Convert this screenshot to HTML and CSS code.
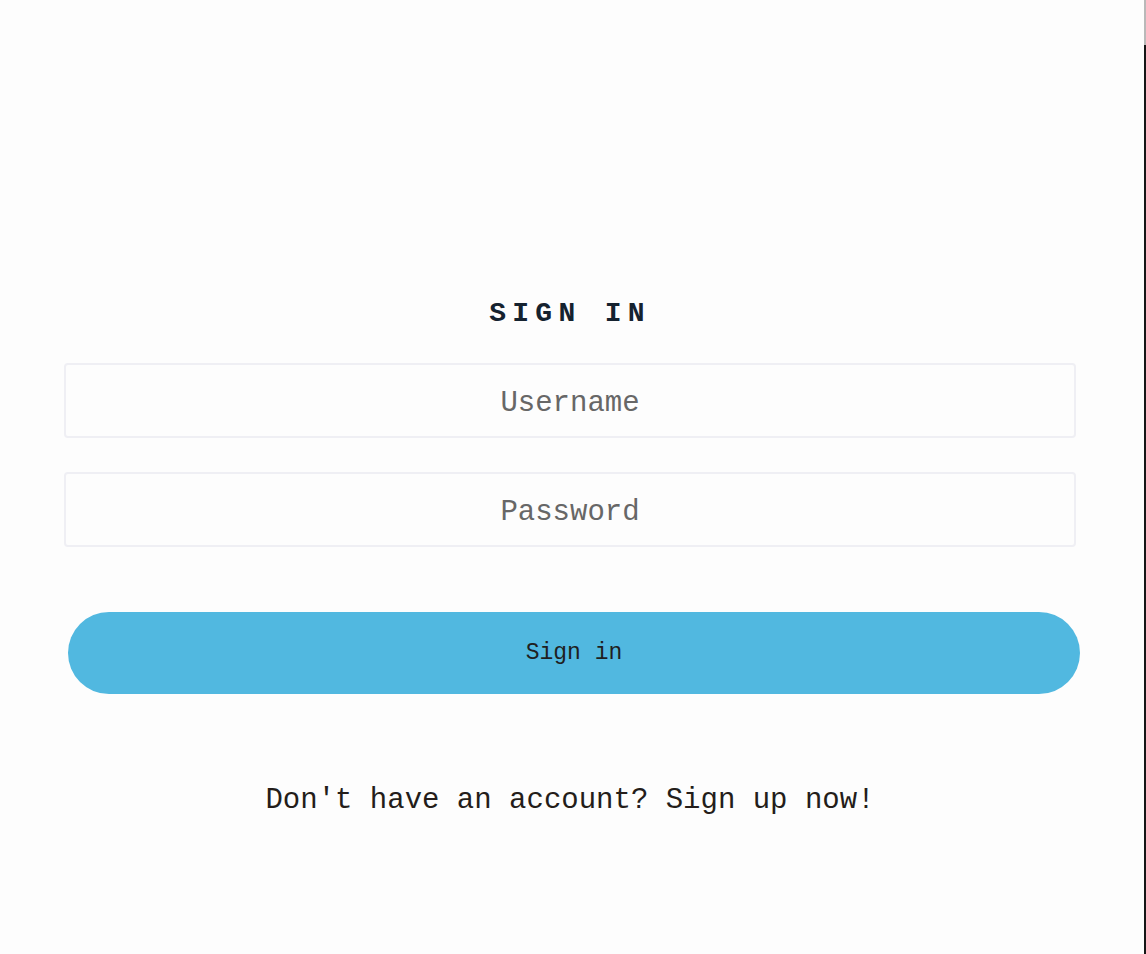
FILE: index.html
```html
<!DOCTYPE html>
<html lang="en">
<head>
<meta charset="utf-8">
<title>Sign in</title>
<link rel="stylesheet" href="styles.css">
</head>
<body>
<div class="main">
  <form class="form">
    <h1 class="heading">SIGN IN</h1>
    <input class="field" type="text" placeholder="Username">
    <input class="field" type="password" placeholder="Password">
    <button class="btn" type="button">Sign in</button>
    <p class="signup">Don't have an account? Sign up now!</p>
  </form>
</div>
<div class="edge"></div>
</body>
</html>
```

FILE: styles.css
```css
html, body {
  margin: 0;
  padding: 0;
}
body {
  display: flex;
  min-height: 954px;
  background: #fdfdfd;
  font-family: "Liberation Mono", "DejaVu Sans Mono", monospace;
}
.main {
  flex: 1;
}
.edge {
  width: 2px;
  background: linear-gradient(#b9b9b9 0 45px, #161616 45px);
}
.form {
  width: 1012px;
  margin: 0 0 0 64px;
  padding-top: 297px;
  display: flex;
  flex-direction: column;
}
.heading {
  margin: 0 0 32px;
  padding-left: 0;
  font-size: 28px;
  line-height: 34px;
  font-weight: 700;
  letter-spacing: 6.3px;
  text-align: center;
  color: #15222f;
}
.field {
  box-sizing: border-box;
  height: 75px;
  margin: 0 0 34px;
  padding: 5px 0 0;
  border: 2px solid #efeff4;
  border-radius: 4px;
  background: #fdfdfd;
  font-family: inherit;
  font-size: 29px;
  text-align: center;
  color: #333;
  outline: none;
}
.field::placeholder {
  color: #676767;
}
.field + .btn {
  margin-top: 31px;
}
.btn {
  box-sizing: border-box;
  height: 82px;
  margin-left: 4px;
  width: 1012px;
  border: none;
  border-radius: 41px;
  background: #51b8e0;
  font-family: inherit;
  font-size: 23px;
  color: #1f1f1f;
  cursor: pointer;
}
.signup {
  margin: 89px 0 0;
  font-size: 29px;
  line-height: 36px;
  text-align: center;
  color: #241d1a;
}
```
